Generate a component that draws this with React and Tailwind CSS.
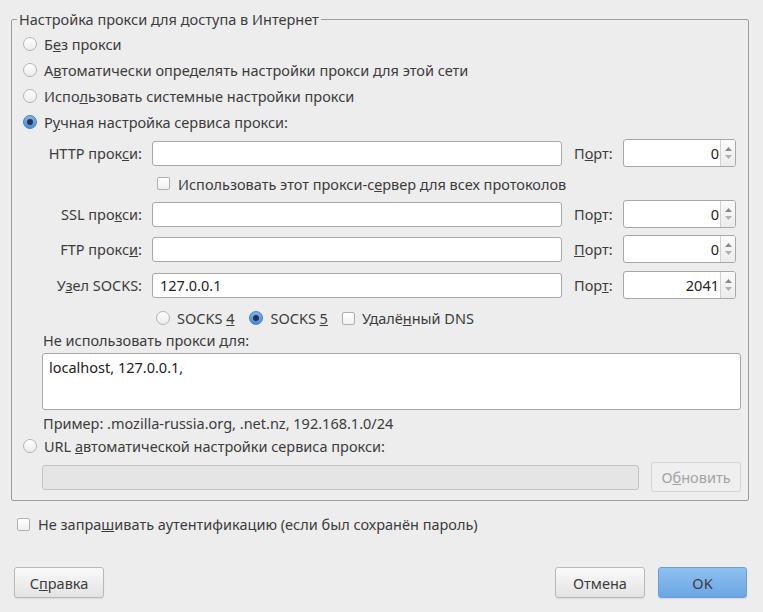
import React from "react";

function Radio({ checked }) {
  return checked ? (
    <span className="flex w-[14px] h-[14px] rounded-full border border-[#3f7fcf] bg-gradient-to-b from-[#7fb3ec] to-[#4a8ad8] items-center justify-center shrink-0">
      <span className="block w-[6px] h-[6px] rounded-full bg-[#28344a]" />
    </span>
  ) : (
    <span className="block w-[14px] h-[14px] rounded-full border border-[#b4b4b4] bg-gradient-to-b from-white to-[#ececec] shrink-0" />
  );
}

function Check() {
  return <span className="block w-[13px] h-[13px] rounded-[2px] border border-[#b0b0b0] bg-gradient-to-b from-white to-[#f0f0f0] shrink-0" />;
}

function Port({ value, u }) {
  return (
    <>
      <span className="pl-[12px]">{u}</span>
      <div className="h-[28px] w-[113px] flex border border-[#a8a8a8] rounded-[3px] bg-white overflow-hidden">
        <span className="flex-1 text-right text-[#222] leading-[26px] pr-[1px]">{value}</span>
        <span className="w-[15px] border-l border-[#d0d0d0] bg-gradient-to-b from-[#fbfbfb] to-[#ececec] flex flex-col items-center justify-center gap-[4px]">
          <svg width="7" height="4" viewBox="0 0 7 4"><path d="M3.5 0L7 4H0z" fill="#8a8a8a" /></svg>
          <svg width="7" height="4" viewBox="0 0 7 4"><path d="M0 0h7L3.5 4z" fill="#b0b0b0" /></svg>
        </span>
      </div>
    </>
  );
}

function Field({ value }) {
  return (
    <div className="h-[25px] border border-[#a8a8a8] rounded-[3px] bg-white px-[7px] leading-[23px] text-[#222]">{value}</div>
  );
}

function Btn({ children, className = "" }) {
  return (
    <button className={`h-[31px] w-[90px] rounded-[3px] border border-[#b9b9b9] bg-gradient-to-b from-[#fafafa] to-[#e3e3e3] shadow-[0_1px_1px_rgba(0,0,0,0.08)] text-[#3c3c3c] ${className}`}>
      {children}
    </button>
  );
}

export default function App() {
  return (
    <div className="w-[763px] h-[612px] bg-[#ededed] text-[#3c3c3c] text-[14.5px] leading-[20px] overflow-hidden" style={{ fontFamily: '"Noto Sans", "Open Sans", sans-serif' }}>
      <div className="pt-[9px] px-[11px]">
        <fieldset className="w-[738px] min-w-0 h-[492px] border border-[#9c9c9c] rounded-[2px] pl-[11px] pr-[7px]">
          <legend className="-ml-[6px] px-[2px] h-[20px]">Настройка прокси для доступа в Интернет</legend>

          <div className="pt-[2px]">
            <div className="h-[26px] flex items-center gap-[7px]"><Radio /><span>Б<u>е</u>з прокси</span></div>
            <div className="h-[26px] flex items-center gap-[7px]"><Radio /><span>А<u>в</u>томатически определять настройки прокси для этой сети</span></div>
            <div className="h-[26px] flex items-center gap-[7px]"><Radio /><span>Испо<u>л</u>ьзовать системные настройки прокси</span></div>
            <div className="h-[26px] flex items-center gap-[7px]"><Radio checked /><span>Р<u>у</u>чная настройка сервиса прокси:</span></div>
          </div>

          <div className="pl-[19px] mt-[4px] grid grid-cols-[110px_410px_61px_113px] items-center">
            <span className="text-right pr-[10px]">HTTP прок<u>с</u>и:</span>
            <div className="h-[28px] flex flex-col justify-center"><Field /></div>
            <Port value="0" u={<>П<u>о</u>рт:</>} />

            <span />
            <div className="col-span-3 h-[33px] flex items-center gap-[8px] pl-[5px]">
              <Check /><span>Использовать этот прокси-с<u>е</u>рвер для всех протоколов</span>
            </div>

            <span className="text-right pr-[10px]">SSL про<u>к</u>си:</span>
            <div className="h-[28px] flex flex-col justify-center"><Field /></div>
            <Port value="0" u={<>По<u>р</u>т:</>} />

            <span className="text-right pr-[10px] mt-[7px]">FTP прокс<u>и</u>:</span>
            <div className="h-[28px] mt-[7px] flex flex-col justify-center"><Field /></div>
            <div className="col-span-2 mt-[7px] grid grid-cols-[61px_113px] items-center">
              <Port value="0" u={<><u>П</u>орт:</>} />
            </div>

            <span className="text-right pr-[10px] mt-[8px]">У<u>з</u>ел SOCKS:</span>
            <div className="h-[28px] mt-[8px] flex flex-col justify-center"><Field value="127.0.0.1" /></div>
            <div className="col-span-2 mt-[8px] grid grid-cols-[61px_113px] items-center">
              <Port value="2041" u={<>Пор<u>т</u>:</>} />
            </div>

            <span />
            <div className="col-span-3 h-[24px] mt-[7px] flex items-center pl-[4px]">
              <Radio /><span className="ml-[7px]">SOCKS <u>4</u></span>
              <span className="ml-[15px]"><Radio checked /></span><span className="ml-[7px]">SOCKS <u>5</u></span>
              <span className="ml-[14px]"><Check /></span><span className="ml-[7px]">Удалё<u>н</u>ный DNS</span>
            </div>
          </div>

          <div className="pl-[19px]">
            <div className="pl-[1px]">Не использовать прокси <u>д</u>ля:</div>
            <div className="mt-[3px] h-[57px] border border-[#a8a8a8] rounded-[3px] bg-white px-[6px] pt-[3px] text-[#222]">localhost, 127.0.0.1,</div>
            <div className="pl-[1px] mt-[3px]">Пример: .mozilla-russia.org, .net.nz, 192.168.1.0/24</div>
          </div>

          <div className="h-[26px] flex items-center gap-[7px]"><Radio /><span>URL <u>а</u>втоматической настройки сервиса прокси:</span></div>

          <div className="pl-[19px] mt-[3px] flex items-center gap-[12px]">
            <div className="flex-1 h-[25px] border border-[#c2c2c2] rounded-[3px] bg-[#e5e5e5]" />
            <button className="h-[30px] w-[90px] rounded-[3px] border border-[#d4d4d4] bg-[#efefef] text-[#a3a3a3]">О<u>б</u>новить</button>
          </div>
        </fieldset>
      </div>

      <div className="mt-[13px] pl-[17px] h-[20px] flex items-center gap-[8px]">
        <Check /><span>Не запра<u>ш</u>ивать аутентификацию (если был сохранён пароль)</span>
      </div>

      <div className="mt-[33px] px-[14px] flex items-center">
        <Btn className="w-[89px]">С<u>п</u>равка</Btn>
        <span className="flex-1" />
        <Btn>Отмена</Btn>
        <button className="ml-[13px] mr-[2px] h-[31px] w-[89px] rounded-[3px] border border-[#6a9fd9] bg-gradient-to-b from-[#8fc0f0] to-[#6ba6e4] text-[#3c3c3c] shadow-[0_1px_1px_rgba(0,0,0,0.08)]">OK</button>
      </div>
    </div>
  );
}
